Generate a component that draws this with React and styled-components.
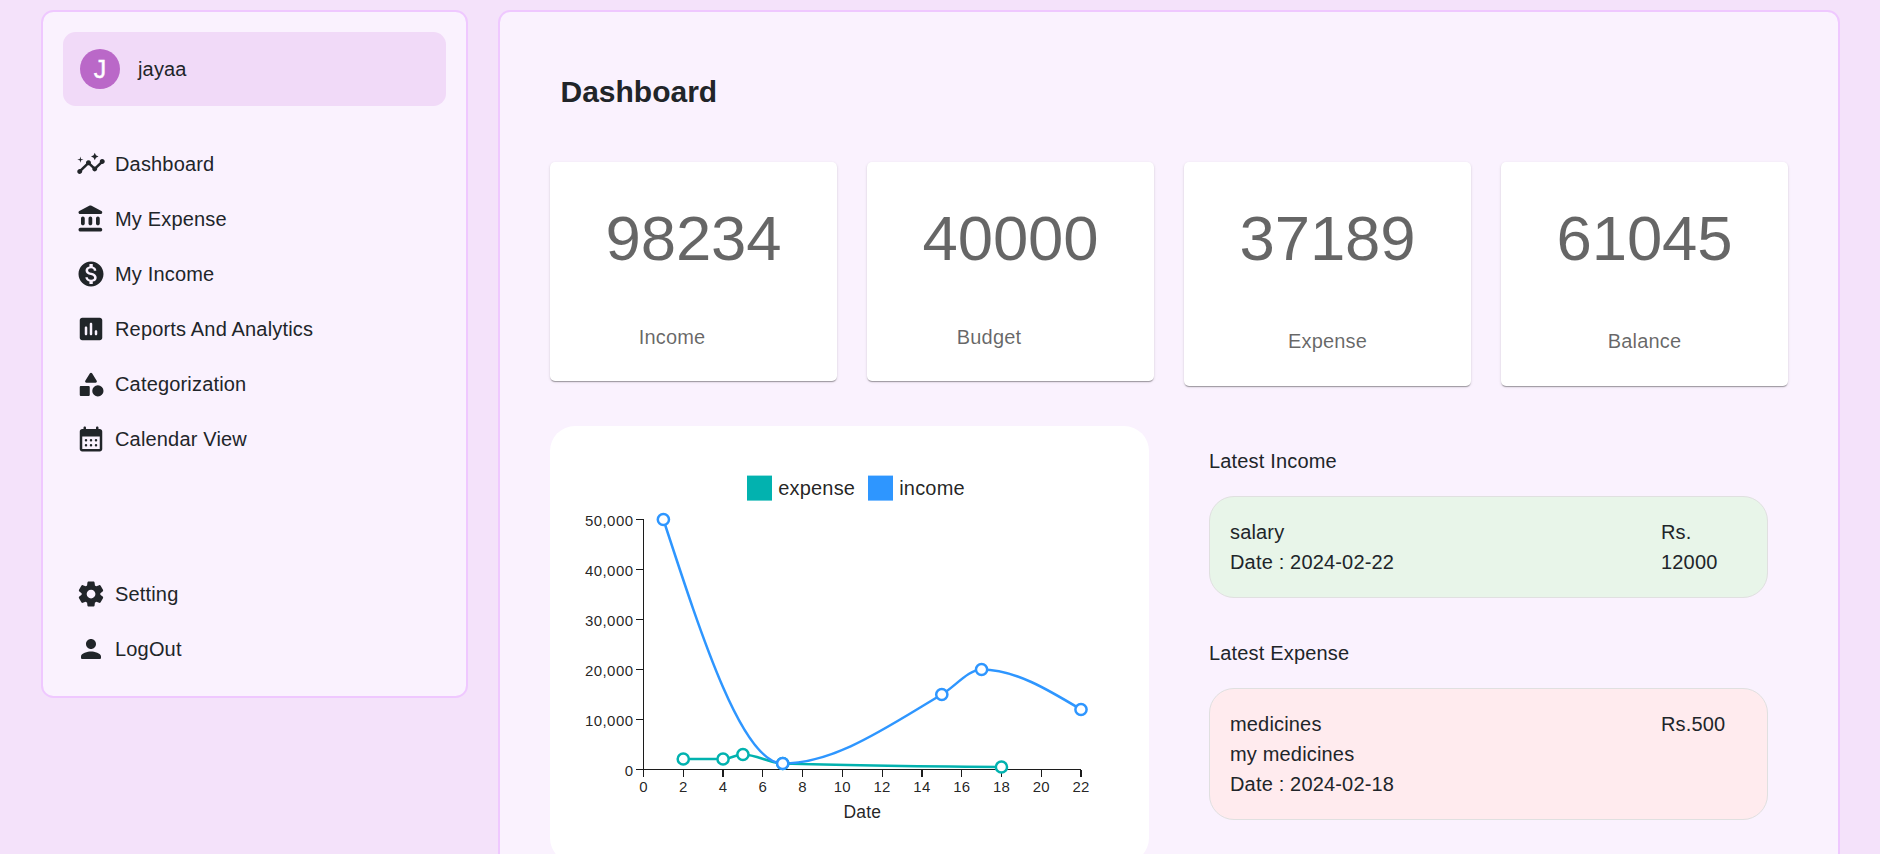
import React from "react";
import styled, { createGlobalStyle } from "styled-components";
import { MdInsights, MdMonetizationOn } from "react-icons/md";

const GlobalStyle = createGlobalStyle`
  * { box-sizing: border-box; }
  body {
    margin: 0;
    background: #f4e2fa;
    color: #212529;
    font-family: "Liberation Sans", Arial, sans-serif;
    font-size: 20px;
    line-height: 30px;
    letter-spacing: 0.17px;
  }
`;

const Page = styled.div`
  display: flex;
  align-items: flex-start;
  gap: 30px;
  height: 100vh;
  overflow: hidden;
  padding: 10px 40px 0 41px;
`;

const Panel = styled.div`
  background: #faf2fe;
  border: 2px solid #efc8ff;
  border-radius: 12.5px;
`;

const Sidebar = styled(Panel)`
  flex: none;
  width: 427px;
  height: 688px;
  padding: 20px;
`;

const UserCard = styled.div`
  display: flex;
  align-items: center;
  gap: 18px;
  height: 74px;
  padding: 0 17px;
  border-radius: 12.5px;
  background: #f1daf8;
`;

const Avatar = styled.div`
  display: flex;
  align-items: center;
  justify-content: center;
  width: 40px;
  height: 40px;
  border-radius: 50%;
  background: #ba68c8;
  color: #fff;
  font-size: 25px;
  -webkit-text-stroke: 0.4px #fff;
`;

const Menu = styled.nav`
  display: flex;
  flex-direction: column;
  gap: 25px;
  margin-top: ${(p) => p.$offset}px;
  padding-left: 13px;
`;

const MenuItem = styled.div`
  display: flex;
  align-items: center;
  gap: 9px;
  height: 30px;

  svg {
    flex: none;
    width: 30px;
    height: 30px;
    fill: currentColor;
  }
`;

const Main = styled(Panel)`
  flex: 1;
  min-width: 0;
  height: 900px;
  padding: 62px 50px 0 50px;
`;

const Title = styled.h1`
  margin: 0 0 52px;
  padding-left: 10.5px;
  font-size: 30px;
  line-height: 36px;
  font-weight: 700;
  letter-spacing: 0;
`;

const StatRow = styled.div`
  display: flex;
  align-items: flex-start;
  gap: 30px;
`;

const StatCard = styled.div`
  flex: 1;
  padding: 38px 0 ${(p) => (p.$tall ? 30 : 29)}px;
  border-radius: 5px;
  background: #fff;
  color: rgba(0, 0, 0, 0.6);
  text-align: center;
  box-shadow:
    0 2px 1px -1px rgba(0, 0, 0, 0.2),
    0 1px 1px 0 rgba(0, 0, 0, 0.14),
    0 1px 3px 0 rgba(0, 0, 0, 0.12);
`;

const StatValue = styled.div`
  font-size: 63.5px;
  line-height: 77px;
  letter-spacing: -0.1px;
`;

const StatLabel = styled.div`
  margin-top: ${(p) => (p.$tall ? 49 : 45)}px;
  padding-right: ${(p) => (p.$tall ? 0 : 43)}px;
`;

const LowerRow = styled.div`
  display: flex;
  align-items: flex-start;
  gap: 60px;
  margin-top: 40px;
`;

const ChartCard = styled.div`
  flex: none;
  width: 599px;
  height: 437px;
  border-radius: 25px;
  background: #fff;

  svg {
    display: block;
  }
`;

const Latest = styled.section`
  flex: none;
  width: 559px;
  padding-top: 20px;
`;

const LatestTitle = styled.div`
  margin-bottom: 20px;
`;

const Entry = styled.div`
  display: flex;
  justify-content: space-between;
  margin-bottom: 40px;
  padding: 20px;
  border: 1px solid #e0e0e0;
  border-radius: 25px;
  background: ${(p) => p.$tone};
`;

const Amount = styled.div`
  width: 86px;
  padding-right: 8px;
`;

const icons = {
  bank: "M4 11.5v4c0 .83.67 1.5 1.5 1.5S7 16.33 7 15.5v-4c0-.83-.67-1.5-1.5-1.5S4 10.67 4 11.5zm6 0v4c0 .83.67 1.5 1.5 1.5s1.5-.67 1.5-1.5v-4c0-.83-.67-1.5-1.5-1.5s-1.5.67-1.5 1.5zM3.5 22h16c.83 0 1.5-.67 1.5-1.5s-.67-1.5-1.5-1.5h-16c-.83 0-1.5.67-1.5 1.5S2.67 22 3.5 22zM16 11.5v4c0 .83.67 1.5 1.5 1.5s1.5-.67 1.5-1.5v-4c0-.83-.67-1.5-1.5-1.5s-1.5.67-1.5 1.5zM10.57 1.49l-7.9 4.16c-.41.21-.67.64-.67 1.1C2 7.44 2.56 8 3.25 8h16.51C20.44 8 21 7.44 21 6.75c0-.46-.26-.89-.67-1.1l-7.9-4.16c-.58-.31-1.28-.31-1.86 0z",
  report: "M19 3H5c-1.1 0-2 .9-2 2v14c0 1.1.9 2 2 2h14c1.1 0 2-.9 2-2V5c0-1.1-.9-2-2-2zM8 17c-.55 0-1-.45-1-1v-5c0-.55.45-1 1-1s1 .45 1 1v5c0 .55-.45 1-1 1zm4 0c-.55 0-1-.45-1-1V8c0-.55.45-1 1-1s1 .45 1 1v8c0 .55-.45 1-1 1zm4 0c-.55 0-1-.45-1-1v-2c0-.55.45-1 1-1s1 .45 1 1v2c0 .55-.45 1-1 1z",
  category: "M11.15 3.4L7.43 9.48c-.41.66.07 1.52.85 1.52h7.43c.78 0 1.26-.86.85-1.52L12.85 3.4c-.39-.64-1.31-.64-1.7 0zM17.5 13a4.5 4.5 0 1 0 0 9 4.5 4.5 0 0 0 0-9zM4 21.5h6c.55 0 1-.45 1-1v-6c0-.55-.45-1-1-1H4c-.55 0-1 .45-1 1v6c0 .55.45 1 1 1z",
  calendar: "M17 2c-.55 0-1 .45-1 1v1H8V3c0-.55-.45-1-1-1s-1 .45-1 1v1H5c-1.11 0-1.99.9-1.99 2L3 20c0 1.1.89 2 2 2h14c1.1 0 2-.9 2-2V6c0-1.1-.9-2-2-2h-1V3c0-.55-.45-1-1-1zm2 18H5V10h14v10zM7 13a1 1 0 1 0 2 0 1 1 0 0 0-2 0zm4 0a1 1 0 1 0 2 0 1 1 0 0 0-2 0zm4 0a1 1 0 1 0 2 0 1 1 0 0 0-2 0zM7 17a1 1 0 1 0 2 0 1 1 0 0 0-2 0zm4 0a1 1 0 1 0 2 0 1 1 0 0 0-2 0zm4 0a1 1 0 1 0 2 0 1 1 0 0 0-2 0z",
  settings: "M19.5 12c0-.23-.01-.45-.03-.68l1.86-1.41c.4-.3.51-.86.26-1.3l-1.87-3.23c-.25-.44-.79-.62-1.25-.42l-2.15.91c-.37-.26-.76-.49-1.17-.68l-.29-2.31c-.06-.5-.49-.88-.99-.88h-3.73c-.51 0-.94.38-1 .88l-.29 2.31c-.41.19-.8.42-1.17.68l-2.15-.91c-.46-.2-1-.02-1.25.42L2.41 8.62c-.25.44-.14.99.26 1.3l1.86 1.41c-.02.22-.03.44-.03.67s.01.45.03.68l-1.86 1.41c-.4.3-.51.86-.26 1.3l1.87 3.23c.25.44.79.62 1.25.42l2.15-.91c.37.26.76.49 1.17.68l.29 2.31c.06.5.49.88.99.88h3.73c.5 0 .93-.38.99-.88l.29-2.31c.41-.19.8-.42 1.17-.68l2.15.91c.46.2 1 .02 1.25-.42l1.87-3.23c.25-.44.14-.99-.26-1.3l-1.86-1.41c.03-.23.04-.45.04-.68zm-7.46 3.5c-1.93 0-3.5-1.57-3.5-3.5s1.57-3.5 3.5-3.5 3.5 1.57 3.5 3.5-1.57 3.5-3.5 3.5z",
  person: "M12 12c2.21 0 4-1.79 4-4s-1.79-4-4-4-4 1.79-4 4 1.79 4 4 4zm0 2c-2.67 0-8 1.34-8 4v1c0 .55.45 1 1 1h14c.55 0 1-.45 1-1v-1c0-2.66-5.33-4-8-4z",
};

const Icon = ({ name }) => (
  <svg viewBox="0 0 24 24">
    <path d={icons[name]} />
  </svg>
);

const menu = [
  [<MdInsights />, "Dashboard"],
  [<Icon name="bank" />, "My Expense"],
  [<MdMonetizationOn />, "My Income"],
  [<Icon name="report" />, "Reports And Analytics"],
  [<Icon name="category" />, "Categorization"],
  [<Icon name="calendar" />, "Calendar View"],
];

const accountMenu = [
  [<Icon name="settings" />, "Setting"],
  [<Icon name="person" />, "LogOut"],
];

const stats = [
  { value: 98234, label: "Income" },
  { value: 40000, label: "Budget" },
  { value: 37189, label: "Expense", tall: true },
  { value: 61045, label: "Balance", tall: true },
];

const series = [
  { name: "expense", color: "#02b2af", x: 197, data: [[2, 2100], [4, 2100], [5, 3000], [7, 1200], [18, 500]] },
  { name: "income", color: "#2e96ff", x: 318, data: [[1, 50000], [7, 1200], [15, 15000], [17, 20000], [22, 12000]] },
];

const LEFT = 93.5;
const TOP = 93.5;
const WIDTH = 437.5;
const HEIGHT = 250;
const sx = (v) => LEFT + (v / 22) * WIDTH;
const sy = (v) => TOP + HEIGHT - (v / 50000) * HEIGHT;

// Monotone cubic interpolation through the points (no overshoot between them).
function monotonePath(points) {
  const n = points.length;
  const h = [];
  const s = [];
  for (let i = 0; i < n - 1; i++) {
    h.push(points[i + 1][0] - points[i][0]);
    s.push((points[i + 1][1] - points[i][1]) / h[i]);
  }
  const t = new Array(n).fill(0);
  for (let i = 1; i < n - 1; i++) {
    const p = (s[i - 1] * h[i] + s[i] * h[i - 1]) / (h[i - 1] + h[i]);
    t[i] =
      (Math.sign(s[i - 1]) + Math.sign(s[i])) *
      Math.min(Math.abs(s[i - 1]), Math.abs(s[i]), 0.5 * Math.abs(p));
  }
  t[0] = (3 * s[0] - t[1]) / 2;
  t[n - 1] = (3 * s[n - 2] - t[n - 2]) / 2;
  let d = `M${points[0][0]},${points[0][1]}`;
  for (let i = 0; i < n - 1; i++) {
    const [x0, y0] = points[i];
    const [x1, y1] = points[i + 1];
    const dx = h[i] / 3;
    d += `C${x0 + dx},${y0 + dx * t[i]},${x1 - dx},${y1 - dx * t[i + 1]},${x1},${y1}`;
  }
  return d;
}

const AxisLine = styled.line`
  stroke: #1c1c1c;
  stroke-width: 1.25px;
  shape-rendering: crispEdges;
`;

const TickLabel = styled.text`
  font-size: 15px;
  letter-spacing: ${(p) => (p.$wide ? 0.45 : 0.2)}px;
  fill: rgba(0, 0, 0, 0.87);
`;

const AxisTitle = styled.text`
  font-size: 17.5px;
  fill: rgba(0, 0, 0, 0.87);
`;

const LegendLabel = styled.text`
  font-size: 20px;
  letter-spacing: 0.19px;
  fill: rgba(0, 0, 0, 0.87);
`;

function Chart() {
  const xTicks = Array.from({ length: 12 }, (_, i) => i * 2);
  const yTicks = [0, 10000, 20000, 30000, 40000, 50000];
  return (
    <svg width="599" height="437">
      {series.map((s) => (
        <g key={s.name}>
          <rect x={s.x} y="49.6" width="25" height="25" fill={s.color} />
          <LegendLabel x={s.x + 31.2} y="69">{s.name}</LegendLabel>
        </g>
      ))}
      {series.map((s) => (
        <path
          key={s.name}
          d={monotonePath(s.data.map(([x, y]) => [sx(x), sy(y)]))}
          fill="none"
          stroke={s.color}
          strokeWidth="2.5"
          strokeLinejoin="round"
        />
      ))}
      <AxisLine x1={LEFT} x2={LEFT + WIDTH} y1={TOP + HEIGHT} y2={TOP + HEIGHT} />
      <AxisLine x1={LEFT} x2={LEFT} y1={TOP} y2={TOP + HEIGHT} />
      {xTicks.map((v) => (
        <g key={v}>
          <AxisLine x1={sx(v)} x2={sx(v)} y1={TOP + HEIGHT} y2={TOP + HEIGHT + 7.5} />
          <TickLabel x={sx(v)} y="365.7" textAnchor="middle">{v}</TickLabel>
        </g>
      ))}
      {yTicks.map((v) => (
        <g key={v}>
          <AxisLine x1={LEFT - 7.5} x2={LEFT} y1={sy(v)} y2={sy(v)} />
          <TickLabel $wide x={LEFT - 10} y={sy(v) + 6.2} textAnchor="end">
            {v.toLocaleString("en-US")}
          </TickLabel>
        </g>
      ))}
      <AxisTitle x={LEFT + WIDTH / 2} y="391.7" textAnchor="middle">Date</AxisTitle>
      {series.map((s) =>
        s.data.map(([x, y]) => (
          <circle
            key={`${s.name}-${x}`}
            cx={sx(x)}
            cy={sy(y)}
            r="5.6"
            fill="#fff"
            stroke={s.color}
            strokeWidth="2.5"
          />
        ))
      )}
    </svg>
  );
}

const MenuList = ({ items, offset }) => (
  <Menu $offset={offset}>
    {items.map(([icon, label]) => (
      <MenuItem key={label}>
        {icon}
        <span>{label}</span>
      </MenuItem>
    ))}
  </Menu>
);

export default function App() {
  return (
    <>
      <GlobalStyle />
      <Page>
        <Sidebar>
          <UserCard>
            <Avatar>J</Avatar>
            <span>jayaa</span>
          </UserCard>
          <MenuList items={menu} offset={43} />
          <MenuList items={accountMenu} offset={125} />
        </Sidebar>
        <Main>
          <Title>Dashboard</Title>
          <StatRow>
            {stats.map((s) => (
              <StatCard key={s.label} $tall={s.tall}>
                <StatValue>{s.value}</StatValue>
                <StatLabel $tall={s.tall}>{s.label}</StatLabel>
              </StatCard>
            ))}
          </StatRow>
          <LowerRow>
            <ChartCard>
              <Chart />
            </ChartCard>
            <Latest>
              <LatestTitle>Latest Income</LatestTitle>
              <Entry $tone="#e8f5e9">
                <div>
                  <div>salary</div>
                  <div>Date : 2024-02-22</div>
                </div>
                <Amount>Rs. 12000</Amount>
              </Entry>
              <LatestTitle>Latest Expense</LatestTitle>
              <Entry $tone="#ffebee">
                <div>
                  <div>medicines</div>
                  <div>my medicines</div>
                  <div>Date : 2024-02-18</div>
                </div>
                <Amount>Rs.500</Amount>
              </Entry>
            </Latest>
          </LowerRow>
        </Main>
      </Page>
    </>
  );
}
